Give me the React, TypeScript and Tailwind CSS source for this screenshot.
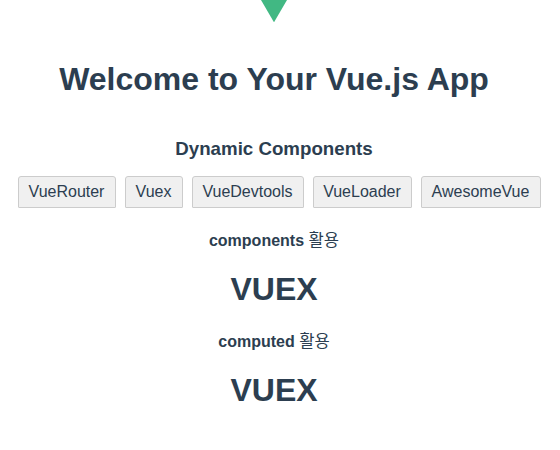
import React from "react";

const tabs = [
  { name: "VueRouter", width: "w-[98px]" },
  { name: "Vuex", width: "w-[58px]" },
  { name: "VueDevtools", width: "w-[112px]" },
  { name: "VueLoader", width: "w-[99px]" },
  { name: "AwesomeVue", width: "w-[120px]" },
];

export default function App() {
  return (
    <div className="flex h-[450px] w-[560px] flex-col items-center overflow-hidden bg-white font-['Liberation_Sans','Noto_Sans_CJK_KR',sans-serif] text-[#2c3e50]">
      <svg className="mr-[12px] block shrink-0" width="28" height="22" viewBox="0 0 28 22" aria-hidden="true">
        <path d="M1 0H27L14 22.3Z" fill="#41b883" />
      </svg>
      <h1 className="mt-[39px] pr-[12px] text-[32px] leading-[37px] font-bold whitespace-nowrap">Welcome to Your Vue.js App</h1>
      <h3 className="mt-[40px] pr-[12px] text-[18.72px] leading-[21px] font-bold whitespace-nowrap">Dynamic Components</h3>
      <div className="mt-[17px] flex w-full gap-[9px] pl-[18px]">
        {tabs.map((tab) => (
          <button
            key={tab.name}
            className={`h-8 shrink-0 rounded-t-[3px] rounded-b-[1px] border border-[#ccc] bg-[#f0f0f0] pr-px text-[16px] leading-[18px] whitespace-nowrap ${tab.width}`}
          >
            {tab.name}
          </button>
        ))}
      </div>
      <p className="mt-[24px] pr-[12px] text-[16px] leading-[18px]">
        <b>components</b> <span className="text-[16.6px]">활용</span>
      </p>
      <h1 className="mt-[21px] pr-[12px] text-[32px] leading-[37px] font-bold">VUEX</h1>
      <p className="mt-[25px] pr-[12px] text-[16px] leading-[18px]">
        <b>computed</b> <span className="text-[16.6px]">활용</span>
      </p>
      <h1 className="mt-[21px] pr-[12px] text-[32px] leading-[37px] font-bold">VUEX</h1>
    </div>
  );
}
